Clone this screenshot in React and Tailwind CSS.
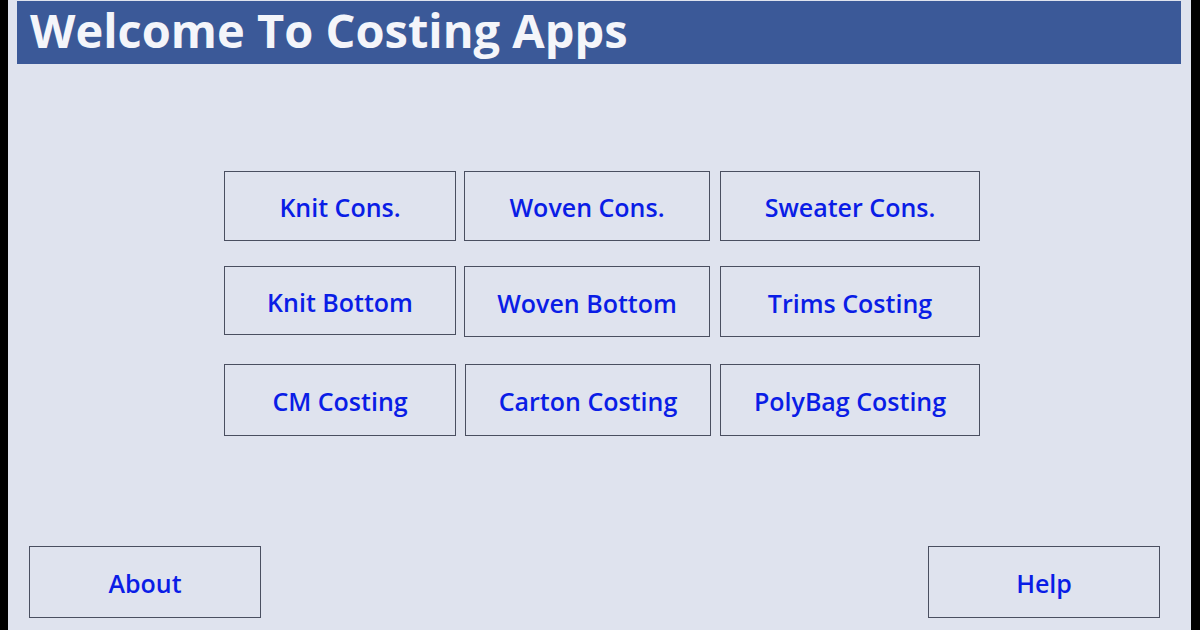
const ROWS = [
  [
    { label: "Knit Cons.", w: "w-[232px]", h: "h-[70px]" },
    { label: "Woven Cons.", w: "w-[246px]", h: "h-[70px]" },
    { label: "Sweater Cons.", w: "w-[260px]", h: "h-[70px]" },
  ],
  [
    { label: "Knit Bottom", w: "w-[232px]", h: "h-[69px]" },
    { label: "Woven Bottom", w: "w-[246px]", h: "h-[71px]" },
    { label: "Trims Costing", w: "w-[260px]", h: "h-[71px]" },
  ],
  [
    { label: "CM Costing", w: "w-[232px]", h: "h-[72px]" },
    { label: "Carton Costing", w: "w-[246px]", h: "h-[72px]" },
    { label: "PolyBag Costing", w: "w-[260px]", h: "h-[72px]" },
  ],
];

function TileButton({ label, className }) {
  return (
    <button
      className={`flex items-center justify-center border border-[#4a4f60] bg-[#dfe3ee] pt-[4px] text-[25px] font-semibold text-[#0a1de6] ${className}`}
    >
      {label}
    </button>
  );
}

export default function App() {
  return (
    <div
      className="flex h-[630px] w-[1200px] overflow-hidden bg-black"
      style={{ fontFamily: '"Open Sans", "Noto Sans", sans-serif' }}
    >
      <div className="w-[8px] shrink-0 bg-black" />
      <div className="flex w-[1183px] shrink-0 flex-col bg-[#dfe3ee]">
        {/* header */}
        <div className="ml-[9px] mr-[10px] mt-[1px] h-[63px] bg-[#3b5998] pl-[13px]">
          <h1 className="text-[47px] font-bold leading-[58px] text-[#f4f5fa]">
            Welcome To Costing Apps
          </h1>
        </div>

        {/* grid of buttons */}
        <div className="ml-[216px] mt-[107px] flex flex-col">
          <div className="flex gap-[8px]">
            <TileButton {...ROWS[0][0]} className={`${ROWS[0][0].w} ${ROWS[0][0].h}`} />
            <TileButton {...ROWS[0][1]} className={`${ROWS[0][1].w} ${ROWS[0][1].h}`} />
            <TileButton {...ROWS[0][2]} className={`ml-[2px] ${ROWS[0][2].w} ${ROWS[0][2].h}`} />
          </div>
          <div className="mt-[25px] flex gap-[8px]">
            <TileButton {...ROWS[1][0]} className={`${ROWS[1][0].w} ${ROWS[1][0].h}`} />
            <TileButton {...ROWS[1][1]} className={`${ROWS[1][1].w} ${ROWS[1][1].h}`} />
            <TileButton {...ROWS[1][2]} className={`ml-[2px] ${ROWS[1][2].w} ${ROWS[1][2].h}`} />
          </div>
          <div className="mt-[27px] flex gap-[8px]">
            <TileButton {...ROWS[2][0]} className={`${ROWS[2][0].w} ${ROWS[2][0].h}`} />
            <TileButton {...ROWS[2][1]} className={`ml-[1px] ${ROWS[2][1].w} ${ROWS[2][1].h}`} />
            <TileButton {...ROWS[2][2]} className={`ml-[1px] ${ROWS[2][2].w} ${ROWS[2][2].h}`} />
          </div>
        </div>

        {/* footer buttons */}
        <div className="mt-[110px] flex justify-between pl-[21px] pr-[31px]">
          <TileButton label="About" className="h-[72px] w-[232px]" />
          <TileButton label="Help" className="h-[72px] w-[232px]" />
        </div>
      </div>
      <div className="w-[9px] shrink-0 bg-black" />
    </div>
  );
}
